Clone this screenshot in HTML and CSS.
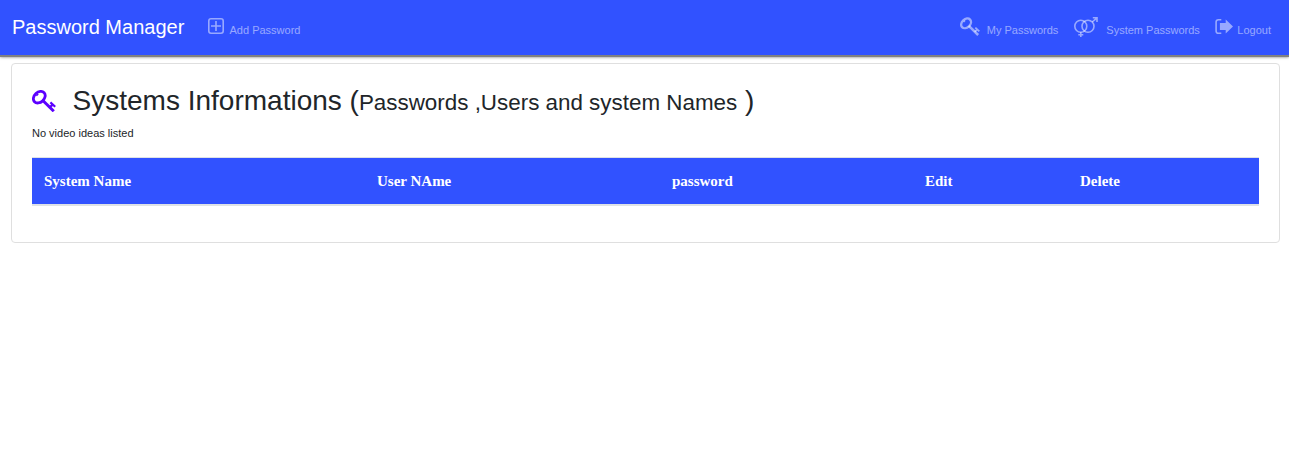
FILE: index.html
```html
<!DOCTYPE html>
<html lang="en">
<head>
<meta charset="utf-8">
<title>Password Manager</title>
<link rel="stylesheet" href="styles.css">
</head>
<body>
<svg class="defs" aria-hidden="true">
  <symbol id="key" viewBox="0 0 24 22">
    <g fill="none" stroke="currentColor">
      <ellipse cx="7.3" cy="7.2" rx="6.6" ry="5" stroke-width="2.8" transform="rotate(-43 7.3 7.2)"/>
      <path d="M10.6 10.2L21.8 21.2" stroke-width="3"/>
      <path d="M17.6 17.4L20.9 14.4M18.4 12.4L23.2 16.8" stroke-width="2.2"/>
      <path d="M4.4 5.8l1.8-1.8" stroke-width="1.4"/>
    </g>
  </symbol>
</svg>
<nav class="navbar">
  <a class="brand">Password Manager</a>
  <a class="link add"><svg class="icon plus" viewBox="0 0 16 16"><g fill="none" stroke="currentColor" stroke-width="1.6"><rect x=".8" y=".8" width="14.4" height="14.4" rx="2.2"/><path d="M8 3v10M3 8h10"/></g></svg>Add Password</a>
  <div class="right">
    <a class="link"><svg class="icon key"><use href="#key"/></svg>My Passwords</a>
    <a class="link"><svg class="icon gender" viewBox="0 0 24 20"><g fill="none" stroke="currentColor" stroke-width="1.6"><circle cx="6.8" cy="9.2" r="6"/><circle cx="14" cy="9.2" r="6"/><path d="M6.8 15.2V20M4.3 17.7h5M18.2 5L23 .8M18.8.8H23V5"/></g></svg>System Passwords</a>
    <a class="link"><svg class="icon logout" viewBox="0 0 18 15"><path d="M6.3.8H3.4Q1.1.8 1.1 3.1v8.8q0 2.3 2.3 2.3h2.9" fill="none" stroke="currentColor" stroke-width="1.6"/><path d="M4.9 4h5.8V.5L18 7.5l-7.3 7V11H4.9z" fill="currentColor"/></svg>Logout</a>
  </div>
</nav>
<main class="card">
  <h1 class="title"><svg class="title-key"><use href="#key"/></svg><span>Systems Informations (<small>Passwords ,Users and system Names</small> )</span></h1>
  <p class="note">No video ideas listed</p>
  <table class="table">
    <colgroup><col class="c1"><col class="c2"><col class="c3"><col class="c4"><col></colgroup>
    <thead><tr><th>System Name</th><th>User NAme</th><th>password</th><th>Edit</th><th>Delete</th></tr></thead>
  </table>
</main>
</body>
</html>
```
FILE: styles.css
```css
* { box-sizing: border-box; }
body { margin: 0; background: #fff; color: #212529; font-family: "Liberation Sans", Arial, sans-serif; font-size: 11px; }
.defs { display: none; }
.navbar { display: flex; height: 55px; padding: 0 18px 0 12px; background: #3152ff; box-shadow: 0 2px 0 #808080, 0 2px 3px #777; }
.brand { width: 196px; padding-top: 12px; font-size: 20px; line-height: 30px; color: #fff; white-space: nowrap; }
.link { display: flex; padding-top: 17px; line-height: 26px; color: rgba(255,255,255,.5); white-space: nowrap; }
.right { display: flex; margin-left: auto; }
.icon { display: block; flex: none; }
.plus { width: 16px; height: 16px; margin: 1px 5.5px 0 0; }
.key { width: 20px; height: 19px; margin: 0 6.6px 0 0; }
.gender { width: 24px; height: 20px; margin: 0 8px 0 16px; }
.logout { width: 18px; height: 15px; margin: 2px 4px 0 15.5px; }
.card { width: 1269px; height: 180px; margin: 8px 0 0 11px; padding: 20px; border: 1px solid #dfdfdf; border-radius: 4px; }
.title { display: flex; margin: 0; height: 34px; font-size: 28px; font-weight: 400; line-height: 34px; }
.title-key { width: 24px; height: 22px; margin: 6px 16.6px 0 0; color: #5c00ff; }
.title small { font-size: 22.4px; }
.note { margin: 7px 0 16px; line-height: 16px; }
.table { width: 1227px; table-layout: fixed; border-collapse: separate; border-spacing: 0; border-top: 1px solid #dee2e6; border-bottom: 2px solid #dee2e6; }
.table th { height: 46px; padding: 0 12px; background: #3152ff; color: #fff; font: 700 15px/22px "Liberation Serif", "Times New Roman", serif; text-align: left; }
.c1 { width: 333px; }
.c2 { width: 295px; }
.c3 { width: 253px; }
.c4 { width: 155px; }
```
